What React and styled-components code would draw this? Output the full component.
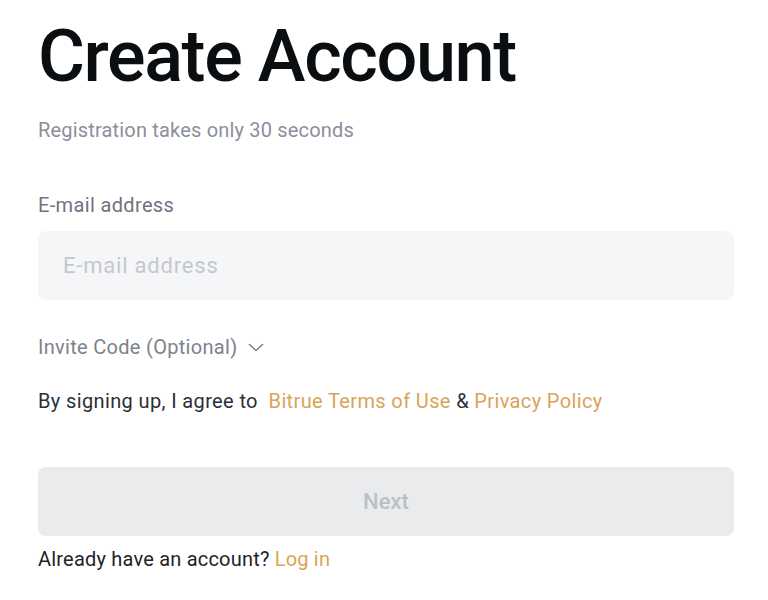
import styled, { createGlobalStyle } from 'styled-components'

const GlobalStyle = createGlobalStyle`
  html, body {
    margin: 0;
    padding: 0;
    background: #ffffff;
    font-family: Roboto, 'Liberation Sans', sans-serif;
  }
`

const ChevronDown = () => (
  <svg width='16' height='9' viewBox='0 0 16 9' fill='none'>
    <path d='M1.5 1.5L8 7.5L14.5 1.5' stroke='#7d828d' strokeWidth='1.6' strokeLinecap='round' strokeLinejoin='round' />
  </svg>
)

const App = () => {
  return (
    <>
      <GlobalStyle />
      <Page>
        <Title>Create Account</Title>
        <Subtitle>Registration takes only 30 seconds</Subtitle>

        <Field>
          <Label htmlFor='email'>E-mail address</Label>
          <Input id='email' type='email' placeholder='E-mail address' />
        </Field>

        <InviteToggle type='button'>
          Invite Code (Optional)
          <ChevronDown />
        </InviteToggle>

        <Terms>
          By signing up, I agree to&nbsp; <Link href='#'>Bitrue Terms of Use</Link> &amp;{' '}
          <Link href='#'>Privacy Policy</Link>
        </Terms>

        <NextButton type='button' disabled>
          Next
        </NextButton>

        <Footer>
          Already have an account? <Link href='#'>Log in</Link>
        </Footer>
      </Page>
    </>
  )
}

export default App

const Page = styled.main`
  width: 696px;
  padding: 21px 0 0 38px;
  display: flex;
  flex-direction: column;
`

const Title = styled.h1`
  margin: 0;
  font-size: 72px;
  font-weight: 500;
  line-height: 72px;
  color: #0b0e11;
  letter-spacing: -1.4px;
`

const Subtitle = styled.p`
  margin: 25px 0 0;
  font-size: 20px;
  line-height: 24px;
  letter-spacing: 0.18px;
  color: #8a8f9b;
`

const Field = styled.div`
  margin-top: 51px;
  display: flex;
  flex-direction: column;
  gap: 14px;
`

const Label = styled.label`
  font-size: 20px;
  line-height: 24px;
  letter-spacing: 0.35px;
  color: #6f7480;
`

const Input = styled.input`
  box-sizing: border-box;
  height: 69px;
  width: 100%;
  padding: 0 25px;
  border: none;
  border-radius: 8px;
  background: #f5f6f8;
  font-family: inherit;
  font-size: 22px;
  letter-spacing: 0.8px;
  color: #1e2329;
  outline: none;

  &::placeholder {
    color: #c4c8ce;
  }
`

const InviteToggle = styled.button`
  margin-top: 35px;
  align-self: flex-start;
  display: flex;
  align-items: center;
  gap: 11px;
  padding: 0;
  border: none;
  background: none;
  font-family: inherit;
  font-size: 20px;
  line-height: 24px;
  letter-spacing: 0.3px;
  color: #7d828d;
  cursor: pointer;
`

const Terms = styled.p`
  margin: 30px 0 0;
  font-size: 20px;
  line-height: 24px;
  letter-spacing: 0.37px;
  color: #2b2f36;
`

const Link = styled.a`
  color: #d9a459;
  text-decoration: none;
`

const NextButton = styled.button`
  margin-top: 54px;
  height: 69px;
  width: 100%;
  border: none;
  border-radius: 8px;
  background: #eaebed;
  font-family: inherit;
  font-size: 22px;
  font-weight: 500;
  color: #bcc0c6;
`

const Footer = styled.p`
  margin: 11px 0 0;
  font-size: 20px;
  line-height: 24px;
  letter-spacing: 0.2px;
  color: #1e2329;
`
